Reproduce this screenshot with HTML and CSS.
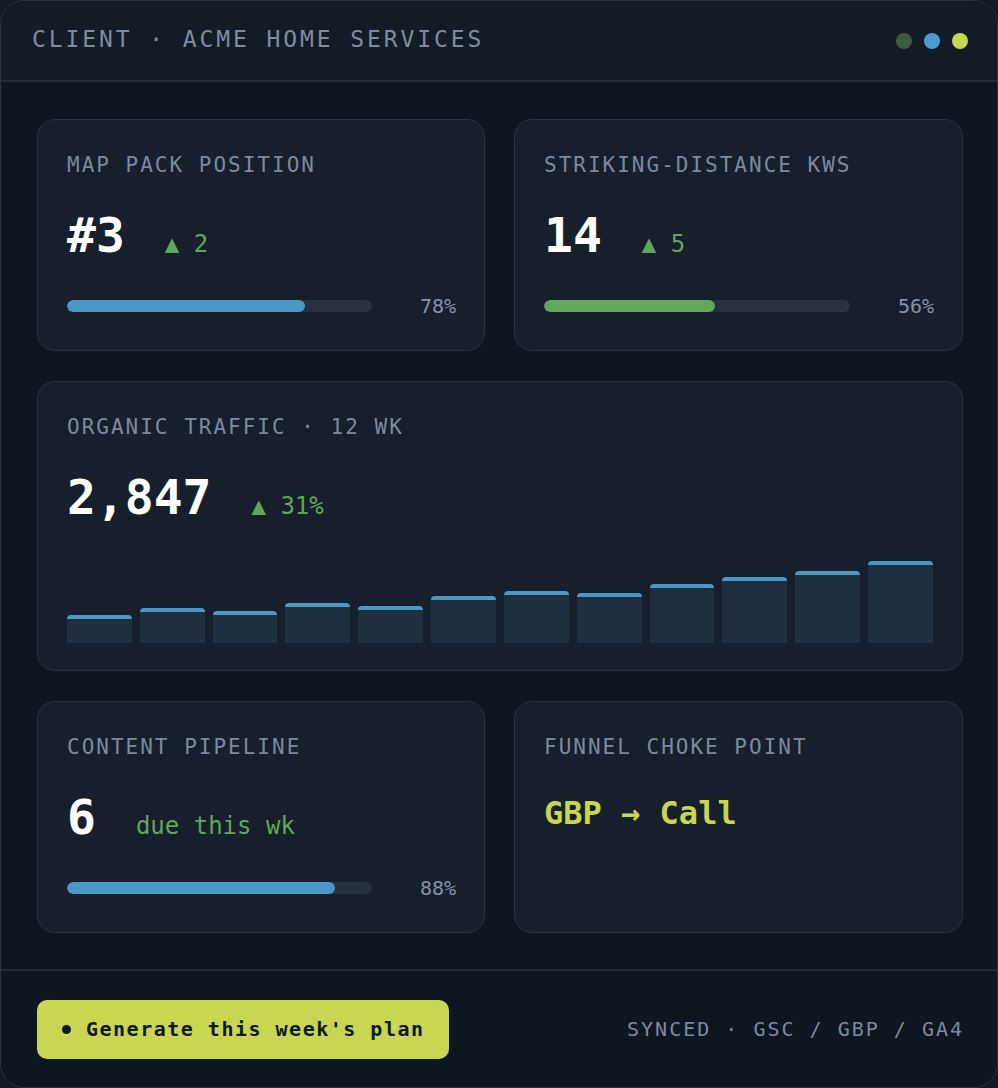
FILE: index.html
```html
<!DOCTYPE html>
<html lang="en">
<head>
<meta charset="utf-8">
<title>Client · Acme Home Services</title>
<link rel="stylesheet" href="styles.css">
</head>
<body>
<div class="frame">
  <header class="topbar">
    <div class="client">CLIENT · ACME HOME SERVICES</div>
    <div class="status-dots">
      <span class="dot dot-green"></span>
      <span class="dot dot-blue"></span>
      <span class="dot dot-lime"></span>
    </div>
  </header>

  <main class="grid">
    <section class="card">
      <div class="label">MAP PACK POSITION</div>
      <div class="metric">
        <span class="value">#3</span>
        <span class="delta">▲ 2</span>
      </div>
      <div class="progress">
        <div class="track"><div class="fill fill-blue" style="width:78%"></div></div>
        <span class="pct">78%</span>
      </div>
    </section>

    <section class="card">
      <div class="label">STRIKING-DISTANCE KWS</div>
      <div class="metric">
        <span class="value">14</span>
        <span class="delta">▲ 5</span>
      </div>
      <div class="progress">
        <div class="track"><div class="fill fill-green" style="width:56%"></div></div>
        <span class="pct">56%</span>
      </div>
    </section>

    <section class="card card-wide">
      <div class="label">ORGANIC TRAFFIC · 12 WK</div>
      <div class="metric">
        <span class="value">2,847</span>
        <span class="delta">▲ 31%</span>
      </div>
      <div class="bars">
        <div class="bar" style="height:28px"></div>
        <div class="bar" style="height:35px"></div>
        <div class="bar" style="height:32px"></div>
        <div class="bar" style="height:40px"></div>
        <div class="bar" style="height:37px"></div>
        <div class="bar" style="height:47px"></div>
        <div class="bar" style="height:52px"></div>
        <div class="bar" style="height:50px"></div>
        <div class="bar" style="height:59px"></div>
        <div class="bar" style="height:66px"></div>
        <div class="bar" style="height:72px"></div>
        <div class="bar" style="height:82px"></div>
      </div>
    </section>

    <section class="card">
      <div class="label">CONTENT PIPELINE</div>
      <div class="metric">
        <span class="value">6</span>
        <span class="delta">due this wk</span>
      </div>
      <div class="progress">
        <div class="track"><div class="fill fill-blue" style="width:88%"></div></div>
        <span class="pct">88%</span>
      </div>
    </section>

    <section class="card">
      <div class="label">FUNNEL CHOKE POINT</div>
      <div class="choke">GBP → Call</div>
    </section>
  </main>

  <footer class="footer">
    <button class="cta" type="button"><span class="cta-dot"></span>Generate this week's plan</button>
    <div class="synced">SYNCED · GSC / GBP / GA4</div>
  </footer>
</div>
</body>
</html>
```

FILE: styles.css
```css
* {
  box-sizing: border-box;
}

html, body {
  margin: 0;
  padding: 0;
}

body {
  background: #111925;
  font-family: "DejaVu Sans Mono", "Liberation Mono", monospace;
  color: #ffffff;
}

.frame {
  width: 998px;
  height: 1088px;
  border: 1px solid #283140;
  border-radius: 24px;
  overflow: hidden;
  background: #0e1621;
  display: flex;
  flex-direction: column;
}

/* top bar */
.topbar {
  height: 81px;
  flex: none;
  display: flex;
  align-items: center;
  justify-content: space-between;
  padding: 0 29px 0 31px;
  background: #131b27;
  border-bottom: 2px solid #242d3a;
}

.client {
  font-size: 23px;
  letter-spacing: 2.9px;
  color: #7f8ca0;
  line-height: 24px;
  margin-bottom: 3px;
}

.status-dots {
  display: flex;
  gap: 12px;
}

.dot {
  width: 16px;
  height: 16px;
  border-radius: 50%;
  display: block;
}

.dot-green { background: #3d5b3e; }
.dot-blue { background: #4a9dcc; }
.dot-lime { background: #c8d651; }

/* cards */
.grid {
  flex: none;
  display: grid;
  grid-template-columns: 448px 449px;
  column-gap: 29px;
  row-gap: 30px;
  padding: 37px 0 36px 36px;
  border-bottom: 2px solid #222b38;
}

.card {
  background: #161f2b;
  border: 1px solid #2a3341;
  border-radius: 18px;
  padding: 33px 28px 31px 29px;
  height: 232px;
}

.card-wide {
  grid-column: 1 / 3;
  height: 290px;
  padding-bottom: 27px;
}

.label {
  font-size: 21px;
  letter-spacing: 2px;
  line-height: 24px;
  color: #7d8a9e;
  white-space: nowrap;
}

.metric {
  display: flex;
  align-items: baseline;
  margin-top: 34px;
  height: 48px;
}

.value {
  font-size: 48px;
  font-weight: bold;
  line-height: 48px;
  color: #ffffff;
}

.delta {
  font-size: 24px;
  line-height: 24px;
  color: #62a65c;
  margin-left: 40px;
}

.progress {
  display: flex;
  align-items: center;
  gap: 48px;
  margin-top: 35px;
  height: 24px;
}

.track {
  flex: 1;
  height: 12px;
  border-radius: 6px;
  background: #28313f;
  overflow: hidden;
}

.fill {
  height: 100%;
  border-radius: 6px;
}

.fill-blue { background: #4a98c5; }
.fill-green { background: #62a65c; }

.pct {
  font-size: 20px;
  line-height: 24px;
  color: #8793a6;
}

/* weekly traffic bars */
.bars {
  display: flex;
  align-items: flex-end;
  gap: 8px;
  height: 96px;
  margin-top: 26px;
  padding-right: 1px;
}

.bar {
  flex: 1;
  background: #1e2f40;
  border-top: 4px solid #4a98c5;
  border-radius: 4px 4px 0 0;
}

.choke {
  margin-top: 30px;
  font-size: 32px;
  font-weight: bold;
  line-height: 48px;
  color: #c8d651;
}

/* footer */
.footer {
  flex: 1;
  display: flex;
  align-items: center;
  justify-content: space-between;
  padding: 0 33px 0 36px;
}

.cta {
  height: 59px;
  width: 412px;
  border: none;
  border-radius: 10px;
  background: #c8d651;
  color: #111820;
  font-family: "DejaVu Sans Mono", "Liberation Mono", monospace;
  font-size: 20px;
  font-weight: bold;
  letter-spacing: 1.5px;
  display: flex;
  align-items: center;
  padding: 0 0 0 25px;
  cursor: pointer;
}

.cta-dot {
  width: 9px;
  height: 9px;
  border-radius: 50%;
  background: #111820;
  margin-right: 15px;
  flex: none;
}

.synced {
  font-size: 20px;
  letter-spacing: 2px;
  color: #7d8a9e;
}
```
